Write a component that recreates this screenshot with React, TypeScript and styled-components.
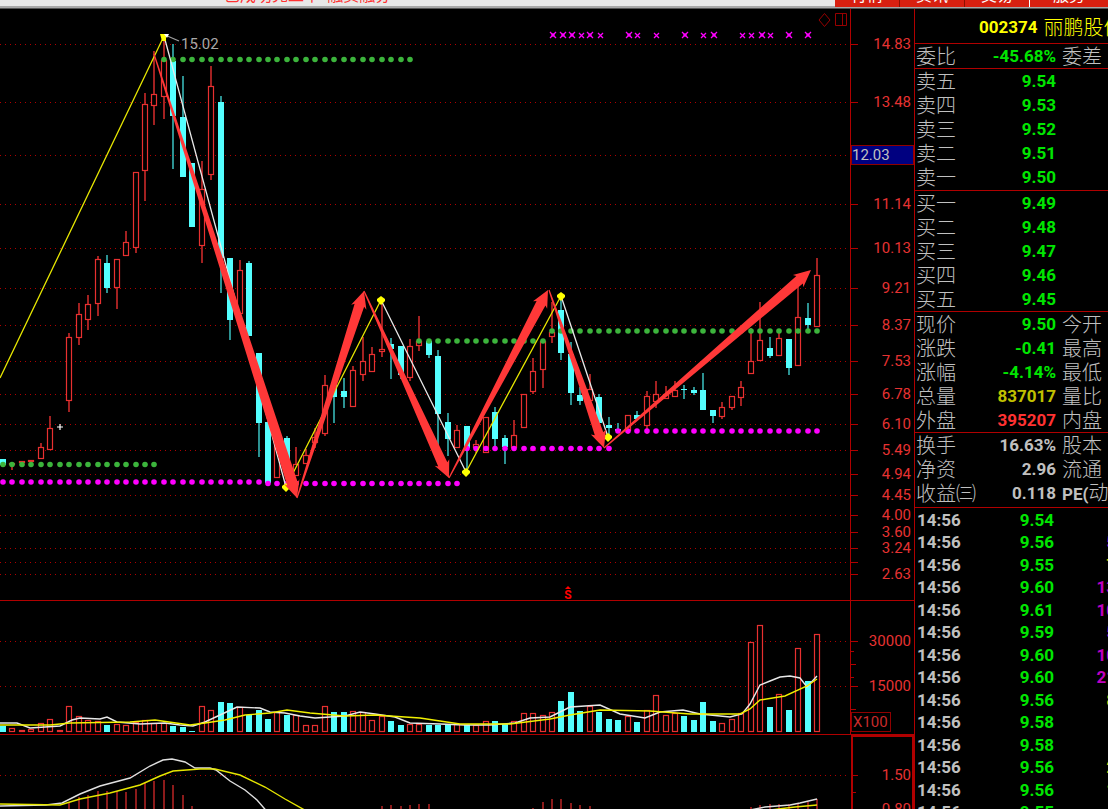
import React from 'react';
import styled, { createGlobalStyle } from 'styled-components';

const latin = 'Roboto, "Liberation Sans", "Noto Sans CJK SC", sans-serif';
const cjk = '"Noto Sans CJK SC", "Liberation Sans", sans-serif';
const LINE = '#b00000';
const UP = '#e83030';
const RED = '#ff3232';
const CYAN = '#54ffff';
const GREEN = '#00e600';
const SILVER = '#c0c0c0';
const GOLD = '#c0c000';
const MAGENTA = '#c000c0';
const ARROW = '#ff3838';

const GlobalStyle = createGlobalStyle`
  * { box-sizing: border-box; }
  body { margin: 0; background: #000; }
`;

const Page = styled.div`
  display: flex;
  flex-direction: column;
  height: 100vh;
  overflow: hidden;
  background: #000;
  color: ${SILVER};
  font-family: ${latin};
`;

const TopBar = styled.header`
  flex: none;
  display: flex;
  align-items: flex-end;
  height: 9px;
  overflow: hidden;
  background: linear-gradient(#e8e8e8 0 6px, #a8a8a8 6px 8px, #555 8px);
`;

const Notice = styled.a`
  flex: 1;
  padding-left: 224px;
  padding-bottom: 5px;
  font: 16px/20px ${cjk};
  color: ${RED};
  text-decoration: none;
  white-space: pre;
`;

const Tabs = styled.nav`
  display: flex;
  width: 273px;
  padding-bottom: 2px;
`;

const Tab = styled.button<{ $bright?: boolean }>`
  flex: 0 0 65px;
  height: 24px;
  padding: 0 0 3px;
  border: 0;
  border-right: 1px solid ${(p) => (p.$bright ? '#fff' : '#8c1000')};
  background: #d82010;
  color: #fff;
  font: 16px/20px ${cjk};
  &:last-child { flex: 1; border-right: 0; }
`;

const Main = styled.main`
  flex: 1;
  display: flex;
  min-height: 0;
`;

const Charts = styled.section`
  flex: 1;
  min-width: 0;
  overflow: hidden;
`;

const Plot = styled.svg`
  display: block;
  width: 100%;
  height: auto;
  font-family: ${latin};
  font-size: 15px;
`;

const Side = styled.aside`
  flex: 0 0 194px;
  overflow: hidden;
  border-left: 1px solid ${LINE};
`;

const Title = styled.h1`
  display: flex;
  align-items: center;
  gap: 6px;
  height: 35px;
  margin: 0;
  padding: 2px 0 0 64px;
  border-bottom: 1px solid ${LINE};
  color: #ff0;
  font: 700 17px/24px ${latin};
  white-space: nowrap;
`;

const Han = styled.span`
  font: 300 20px/22px ${cjk};
`;

const Quotes = styled.table<{ $after: number }>`
  table-layout: fixed;
  width: 206px;
  border-collapse: separate;
  border-spacing: 0;
  padding: 0 0 ${(p) => p.$after}px 1px;
  border-bottom: 1px solid ${LINE};
`;

const QuoteRow = styled.tr`
  height: 24px;
`;

const Label = styled.th<{ $second?: boolean }>`
  width: ${(p) => (p.$second ? 'auto' : '60px')};
  padding: 0 0 0 ${(p) => (p.$second ? '6px' : '0')};
  text-align: left;
  font: 300 20px/22px ${cjk};
  white-space: nowrap;
  color: ${SILVER};
`;

const Value = styled.td<{ $color: string }>`
  width: 80px;
  padding: 0;
  text-align: right;
  font: 700 17px/22px ${latin};
  color: ${(p) => p.$color};
`;

const Strong = styled.span`
  font: 700 17px/22px ${latin};
`;

const Ticks = styled.table`
  table-layout: fixed;
  width: 201px;
  border-collapse: collapse;
`;

const TickRow = styled.tr`
  height: 22px;
  &:nth-child(odd) { height: 23px; }
`;

const TickCell = styled.td<{ $w: number; $color: string; $left?: boolean }>`
  width: ${(p) => p.$w}px;
  padding: 0 0 0 ${(p) => (p.$left ? '2px' : '0')};
  text-align: ${(p) => (p.$left ? 'left' : 'right')};
  font: 700 17px/22px ${latin};
  color: ${(p) => p.$color};
`;

/* Candles: [wick top, body top, body bottom, wick bottom, volume top, falling] */
type Candle = [number, number, number, number, number, number];
const candles: Candle[] = [
  [459, 459, 465, 465, 726, 1], [463, 463, 465, 470, 728, 0], [461, 461, 463, 463, 730, 0],
  [460, 460, 462, 462, 729, 0], [443, 447, 459, 459, 723, 0], [416, 428, 450, 450, 719, 0],
  [0, 0, 0, 0, 730, 0], [333, 337, 401, 412, 706, 0], [303, 314, 338, 345, 716, 0],
  [295, 304, 320, 330, 720, 0], [256, 259, 304, 316, 721, 0], [255, 263, 288, 293, 725, 1],
  [259, 259, 288, 309, 724, 0], [231, 242, 256, 256, 725, 0], [172, 172, 248, 253, 722, 0],
  [93, 104, 171, 201, 720, 0], [51, 94, 106, 125, 723, 0], [35, 60, 97, 119, 723, 0],
  [44, 61, 116, 169, 726, 1], [76, 117, 177, 177, 727, 1], [163, 163, 227, 227, 731, 1],
  [161, 189, 246, 263, 706, 0], [66, 86, 175, 180, 710, 0], [96, 102, 258, 293, 702, 1],
  [258, 258, 320, 340, 703, 1], [260, 270, 314, 314, 707, 0], [261, 263, 336, 336, 715, 1],
  [353, 353, 423, 457, 710, 1], [422, 422, 483, 483, 719, 1], [440, 440, 478, 478, 712, 0],
  [436, 438, 475, 475, 715, 1], [447, 464, 476, 476, 715, 0], [449, 455, 464, 464, 725, 0],
  [428, 437, 443, 448, 725, 0], [375, 385, 434, 436, 706, 0], [385, 385, 397, 423, 712, 1],
  [378, 391, 397, 408, 712, 1], [366, 370, 407, 407, 711, 0], [337, 361, 375, 381, 712, 0],
  [347, 354, 372, 372, 720, 0], [300, 349, 352, 357, 716, 0], [338, 344, 349, 379, 721, 1],
  [346, 346, 375, 379, 725, 1], [339, 346, 378, 381, 724, 0], [316, 341, 346, 351, 724, 0],
  [341, 341, 355, 358, 725, 1], [350, 356, 414, 446, 725, 1], [413, 422, 439, 456, 725, 1],
  [425, 430, 448, 448, 724, 0], [426, 426, 448, 470, 725, 1], [440, 444, 448, 453, 725, 0],
  [417, 417, 453, 453, 721, 0], [407, 412, 439, 447, 721, 1], [435, 438, 447, 464, 724, 1],
  [420, 435, 448, 448, 721, 0], [394, 394, 428, 428, 713, 0], [358, 371, 392, 394, 713, 0],
  [340, 341, 370, 388, 715, 0], [302, 332, 337, 343, 712, 0], [295, 310, 353, 360, 701, 1],
  [342, 354, 393, 405, 692, 1], [387, 395, 401, 405, 711, 1], [374, 389, 401, 401, 706, 0],
  [394, 397, 423, 423, 712, 1], [417, 425, 428, 438, 719, 1], [423, 429, 431, 433, 720, 1],
  [415, 415, 431, 434, 716, 0], [411, 415, 419, 419, 722, 1], [391, 396, 426, 434, 710, 0],
  [381, 394, 402, 408, 695, 0], [386, 394, 399, 399, 715, 0], [381, 390, 397, 397, 713, 0],
  [385, 389, 390, 399, 716, 1], [387, 390, 393, 395, 720, 1], [373, 390, 410, 410, 702, 1],
  [410, 410, 416, 423, 721, 1], [402, 407, 417, 419, 723, 0], [396, 396, 408, 410, 719, 0],
  [381, 387, 398, 406, 713, 0], [328, 361, 374, 374, 642, 0], [302, 340, 361, 361, 625, 0],
  [337, 348, 356, 358, 707, 1], [333, 338, 356, 356, 694, 0], [339, 339, 368, 375, 710, 1],
  [287, 317, 366, 366, 648, 0], [303, 318, 325, 329, 681, 1], [258, 275, 327, 327, 634, 0],
];
const cx = (i: number) => Math.round(3 + i * 9.465);

const Body = ({ i, top, bottom, down }: { i: number; top: number; bottom: number; down: boolean }) =>
  down ? (
    <rect x={cx(i) - 3} y={top} width={6} height={Math.max(bottom - top, 1)} fill={CYAN} />
  ) : (
    <rect x={cx(i) - 2.5} y={top + 0.5} width={5} height={Math.max(bottom - top - 1, 1)} fill="#000" stroke={UP} strokeWidth={1.2} />
  );

const Dots = ({ from, to, y, color }: { from: number; to: number; y: number; color: string }) => (
  <g fill={color}>
    {Array.from({ length: to - from + 1 }, (_, k) => (
      <circle key={k} cx={cx(from + k)} cy={y} r={2.8} />
    ))}
  </g>
);

type Pt = [number, number];

/* An arrow whose shaft widens from a point at its tail to its head. */
const Arrow = ({ from, to, w = 10 }: { from: Pt; to: Pt; w?: number }) => {
  const len = Math.hypot(to[0] - from[0], to[1] - from[1]);
  const ux = (to[0] - from[0]) / len;
  const uy = (to[1] - from[1]) / len;
  const at = (d: number, s: number) => `${to[0] - ux * d - uy * s},${to[1] - uy * d + ux * s}`;
  return (
    <polygon
      fill={ARROW}
      points={[at(0, 0), at(17, 8), at(15, w / 2), at(len, 0.6), at(len, -0.6), at(15, -w / 2), at(17, -8)].join(' ')}
    />
  );
};

const priceGrid: [number, string][] = [
  [44, '14.83'], [102, '13.48'], [155, ''], [204, '11.14'], [248, '10.13'], [288, '9.21'],
  [325, '8.37'], [361, '7.53'], [394, '6.78'], [424, '6.10'], [450, '5.49'], [474, '4.94'],
  [495, '4.45'], [515, '4.00'], [532, '3.60'], [548, '3.24'], [562, ''], [574, '2.63'],
];

const Grid = ({ lines }: { lines: [number, string][] }) => (
  <>
    {lines.map(([y, text]) => (
      <g key={y}>
        <path d={`M0 ${y}.5H847`} stroke="#b00000" strokeDasharray="1 4" shapeRendering="crispEdges" />
        <path d={`M851 ${y}.5h7`} stroke={LINE} shapeRendering="crispEdges" />
        <text x={911} y={y + 5} textAnchor="end" fill="#e63232">{text}</text>
      </g>
    ))}
  </>
);

const pivots: Pt[] = [[381, 300], [466, 472], [561, 296], [608, 437], [286, 487]];
const signals: [number, boolean][] = [
  [553, true], [563, true], [572, true], [581, false], [590, true], [600, false], [629, true],
  [637, false], [656, false], [685, true], [703, false], [714, true], [742, false], [751, false],
  [762, true], [770, false], [789, true], [808, true],
];

const PriceChart = () => (
  <Plot viewBox="0 9 914 592" role="img" aria-label="K线">
    <Grid lines={priceGrid} />
    <path d="M850.5 9V601M0 600.5H914" stroke={LINE} shapeRendering="crispEdges" />
    <g fill="none" stroke="#980000">
      <path d="M824.5 13.5l5.5 6.500-5.500 6.500-5.500-6.500z" />
      <path d="M835.500 13.500h11v12h-11zM842.500 13.500v12" />
    </g>
    <rect x={851.5} y={145.5} width={62} height={19} fill="#000080" stroke="#900000" />
    <text x={852} y={160} fill={SILVER}>12.03</text>
    {signals.map(([x, big]) => (
      <g key={x} stroke="#f0f" fill="#f0f">
        <path d={big ? `M${x - 3} 32l6 6m0-6l-6 6` : `M${x - 2} 33l5 5m0-5l-5 5`} strokeWidth={1.3} />
        {big && <rect x={x - 1.5} y={33.5} width={3} height={3} stroke="none" />}
      </g>
    ))}
    {candles.map(([hi, top, bottom, lo, , down], i) =>
      hi > 0 ? (
        <g key={i}>
          <path d={`M${cx(i)} ${hi}V${lo}`} stroke={down ? '#40d0d0' : UP} strokeWidth={1.4} />
          <Body i={i} top={top} bottom={bottom} down={down === 1} />
        </g>
      ) : null,
    )}
    <path d="M57 427h6M60 424v6" stroke="#fff" strokeWidth={1.2} />
    <Dots from={17} to={43} y={59.5} color="#3cb43c" />
    <Dots from={0} to={16} y={464.5} color="#3cb43c" />
    <Dots from={44} to={57} y={341} color="#3cb43c" />
    <Dots from={58} to={86} y={331} color="#3cb43c" />
    <Dots from={0} to={27} y={482} color="#f0f" />
    <Dots from={28} to={48} y={483.5} color="#f0f" />
    <Dots from={49} to={64} y={448.5} color="#f0f" />
    <Dots from={65} to={86} y={431} color="#f0f" />
    <g fill="none" strokeWidth={1.3}>
      <path d="M0 378L164 36M286 487L381 300M466 472L561 296" stroke="#e6e600" />
      <path d="M164 36L286 487M381 300L466 472M561 296L608 437" stroke="#e8e8e8" />
      <path d="M165 35l14 6" stroke="#a0a0a0" />
    </g>
    <path d="M160 34h8l-2 3v4h-4z" fill="#ff0" />
    <path d="M164 34l5 0-2 4z" fill="#fff" />
    {pivots.map(([x, y]) => (
      <path key={x} d={`M${x} ${y - 4}l4 3v2l-4 4-4-4v-2z`} fill="#ff0" />
    ))}
    <text x={181} y={49} fill="#a8a8a8">15.02</text>
    <Arrow from={[154, 54]} to={[297, 498]} w={11} />
    <Arrow from={[297, 498]} to={[364, 291]} />
    <Arrow from={[364, 291]} to={[449, 478]} />
    <Arrow from={[449, 478]} to={[548, 290]} />
    <Arrow from={[549, 290]} to={[604, 448]} w={9} />
    <Arrow from={[604, 448]} to={[811, 270]} />
    <path d="M565 589l3-3 3 3z" fill="#f00" />
    <text x={568} y={599} textAnchor="middle" fill="#f00" fontSize={12} fontWeight={700}>S</text>
  </Plot>
);

const VolumeChart = () => (
  <Plot viewBox="0 601 914 134" role="img" aria-label="成交量">
    <Grid lines={[[641, '30000'], [686, '15000']]} />
    <path d="M850.5 601V735M0 734.5H914M851 651.5h3M851 664.5h5M851 677.5h3M851 709.5h5" stroke={LINE} shapeRendering="crispEdges" />
    {candles.map(([, , , , vol, down], i) => (
      <Body key={i} i={i} top={vol} bottom={732} down={down === 1} />
    ))}
    <g fill="none" strokeWidth={1.4}>
      <polyline stroke="#e8e8e8" points="0,723 17,723 30,728 45,727 60,726 72,720 80,718 100,719 107,717 117,722 140,724 165,723 180,725 193,726 205,722 220,715 237,707 260,708 270,712 285,713 300,716 315,718 345,716 360,712 375,714 395,717 410,723 440,724 465,725 490,725 515,723 530,718 550,717 570,707 600,705 620,714 645,718 660,712 683,710 700,714 730,717 742,714 750,704 760,685 770,681 780,677 790,676 800,678 807,687 817,676" />
      <polyline stroke="#f0f000" points="0,725 50,725 70,723 130,722 155,720 190,725 205,723 225,720 245,715 270,713 287,710 310,713 345,716 375,715 420,718 440,721 460,724 510,724 550,719 570,715 600,710 650,711 690,714 740,714 750,709 760,700 785,696 807,686 817,679" />
    </g>
    <rect x={851.5} y={712.5} width={39} height={19} fill="#000" stroke="#900000" />
    <text x={853} y={727} fill="#c82a2a">X100</text>
  </Plot>
);

const bars: Pt[] = [
  [7, 802], [8, 797], [9, 795], [10, 791], [11, 791], [12, 791], [13, 792], [14, 789], [15, 783],
  [16, 781], [17, 780], [18, 785], [19, 795], [20, 806], [40, 806], [41, 805], [42, 806], [43, 805],
  [44, 804], [45, 804], [56, 808], [57, 802], [58, 799], [59, 799], [60, 803], [61, 805], [62, 806],
  [79, 807], [80, 805], [81, 804], [82, 804], [83, 804], [84, 803], [85, 802], [86, 799],
];

const TrendChart = () => (
  <Plot viewBox="0 735 914 90" role="img" aria-label="MACD">
    <Grid lines={[[775, '1.50'], [809, '0.80']]} />
    <path d="M852 825V736H913V825" fill="none" stroke={LINE} strokeWidth={2} />
    <path d="M853 792.5h3" stroke={LINE} />
    {bars.map(([i, y]) => (
      <path key={i} d={`M${cx(i)} ${y}V825`} stroke="#d82a2a" strokeWidth={1.3} />
    ))}
    <g fill="none" strokeWidth={1.4}>
      <polyline stroke="#e0e0e0" points="0,806 46,805 62,803 80,794 100,786 130,778 150,766 163,760 172,759 185,762 195,768 210,768 216,770 230,781 245,790 257,800 270,815" />
      <polyline stroke="#e6e600" points="0,804 60,805 80,799 110,793 140,785 160,776 173,771 200,769 215,769 240,775 265,787 285,799 310,813" />
      <polyline stroke="#e0e0e0" points="750,810 765,807 790,805 800,803 817,799" />
      <polyline stroke="#e6e600" points="770,810 795,807 817,805" />
    </g>
  </Plot>
);

type Quote = [label: string, value: string, color: string, second?: React.ReactNode];
const sections: { after: number; rows: Quote[] }[] = [
  { after: 0, rows: [['委比', '-45.68%', GREEN, '委差']] },
  { after: 1, rows: [['卖五', '9.54', GREEN], ['卖四', '9.53', GREEN], ['卖三', '9.52', GREEN], ['卖二', '9.51', GREEN], ['卖一', '9.50', GREEN]] },
  { after: 0, rows: [['买一', '9.49', GREEN], ['买二', '9.48', GREEN], ['买三', '9.47', GREEN], ['买四', '9.46', GREEN], ['买五', '9.45', GREEN]] },
  { after: 0, rows: [['现价', '9.50', GREEN, '今开'], ['涨跌', '-0.41', GREEN, '最高'], ['涨幅', '-4.14%', GREEN, '最低'], ['总量', '837017', GOLD, '量比'], ['外盘', '395207', RED, '内盘']] },
  { after: 2, rows: [['换手', '16.63%', SILVER, '股本'], ['净资', '2.96', SILVER, '流通'], ['收益㈢', '0.118', SILVER, <><Strong>PE(</Strong>动</>]] },
];

const ticks: [price: string, volume: string, color: string][] = [
  ['9.54', '', GOLD], ['9.56', '5', MAGENTA], ['9.55', '7', GOLD], ['9.60', '13', MAGENTA],
  ['9.61', '10', MAGENTA], ['9.59', '5', MAGENTA], ['9.60', '10', MAGENTA], ['9.60', '21', MAGENTA],
  ['9.56', '8', GOLD], ['9.58', '', GOLD], ['9.58', '', GOLD], ['9.56', '2', GOLD],
  ['9.56', '1', GOLD], ['9.55', '', GOLD],
];

export default function App() {
  return (
    <Page>
      <GlobalStyle />
      <TopBar>
        <Notice href="#">已成功完工单  融资融券</Notice>
        <Tabs>
          <Tab>行情</Tab>
          <Tab>资讯</Tab>
          <Tab $bright>交易</Tab>
          <Tab>服务</Tab>
        </Tabs>
      </TopBar>
      <Main>
        <Charts>
          <PriceChart />
          <VolumeChart />
          <TrendChart />
        </Charts>
        <Side>
          <Title>002374<Han>丽鹏股份</Han></Title>
          {sections.map(({ after, rows }) => (
            <Quotes key={rows[0][0]} $after={after}>
              <tbody>
                {rows.map(([label, value, color, second]) => (
                  <QuoteRow key={label}>
                    <Label scope="row">{label}</Label>
                    <Value $color={color}>{value}</Value>
                    <Label as="td" $second>{second}</Label>
                  </QuoteRow>
                ))}
              </tbody>
            </Quotes>
          ))}
          <Ticks>
            <tbody>
              {ticks.map(([price, volume, color], i) => (
                <TickRow key={i}>
                  <TickCell $w={60} $color={SILVER} $left>14:56</TickCell>
                  <TickCell $w={79} $color={GREEN}>{price}</TickCell>
                  <TickCell $w={62} $color={color}>{volume}</TickCell>
                </TickRow>
              ))}
            </tbody>
          </Ticks>
        </Side>
      </Main>
    </Page>
  );
}
